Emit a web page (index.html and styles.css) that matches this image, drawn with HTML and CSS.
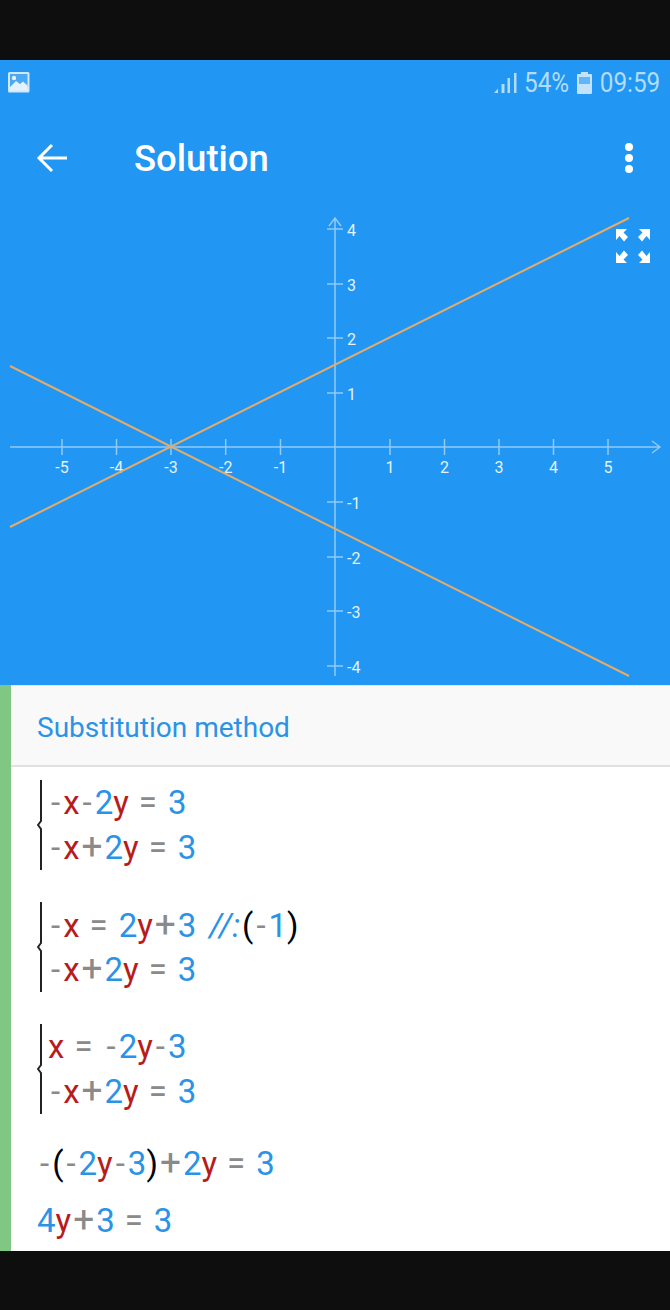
FILE: index.html
```html
<!DOCTYPE html>
<html lang="en">
<head>
    <meta charset="UTF-8">
    <meta name="viewport" content="width=device-width, initial-scale=1.0">
    <title>Solution</title>
    <link rel="stylesheet" href="styles.css">
</head>
<body>
    <div class="black-bar top"></div>

    <div class="blue-area">
        <div class="status-bar">
            <svg class="picture-icon" width="22" height="21" viewBox="0 0 22 21">
                <rect width="21.500" height="20.500" rx="1.500" fill="#cfe8fc"/>
                <rect x="2" y="2" width="17.500" height="13" fill="#4aa8f5"/>
                <path d="M2 15 L8 9 L12 12 L15 9.500 L19.500 13.500 V18.500 H2 Z" fill="#e3f2fd"/>
                <circle cx="6" cy="6" r="2.200" fill="#e3f2fd"/>
            </svg>
            <div class="status-right">
                <svg class="signal" width="23" height="22" viewBox="0 0 23 22">
                    <path d="M0 21 L4 16.500 V21 Z" fill="#b3dcfb"/>
                    <rect x="7.500" y="12" width="3" height="9" fill="#b3dcfb"/>
                    <rect x="13.500" y="6" width="2.500" height="15" fill="#b3dcfb"/>
                    <rect x="20" y="1" width="2.500" height="20" fill="#b3dcfb"/>
                </svg>
                <span class="status-text percent">54%</span>
                <svg class="battery" width="15" height="22" viewBox="0 0 15 22">
                    <path d="M4 0 H11 V2 H14 Q15 2 15 3 V21 Q15 22 14 22 H1 Q0 22 0 21 V3 Q0 2 1 2 H4 Z" fill="#c3e2fb"/>
                    <rect x="2" y="5" width="11" height="7" fill="#64b5f6"/>
                </svg>
                <span class="status-text clock">09:59</span>
            </div>
        </div>

        <div class="toolbar">
            <svg class="back-icon" width="32" height="30" viewBox="0 0 32 30">
                <path d="M31 15 H3 M16 2 L3 15 L16 28" fill="none" stroke="#fff" stroke-width="3"/>
            </svg>
            <div class="toolbar-title">Solution</div>
            <div class="menu-dots"><i></i><i></i><i></i></div>
        </div>

        <div class="graph">
            <!-- svg y = screen y - 200 -->
            <svg width="670" height="485" viewBox="0 200 670 485">
                <g class="axis">
                    <path d="M10 447 H660 M652 441 L660 447 L652 453"/>
                    <path d="M335 676 V218 M329 226 L335 218 L341 226"/>
                    <path d="M62 439 V455 M116.500 439 V455 M171 439 V455 M225.700 439 V455 M280.500 439 V455"/>
                    <path d="M390 439 V455 M444.500 439 V455 M499 439 V455 M553.500 439 V455 M608 439 V455"/>
                    <path d="M327 229 H343 M327 284 H343 M327 338 H343 M327 393 H343"/>
                    <path d="M327 502 H343 M327 557 H343 M327 611 H343 M327 666 H343"/>
                </g>
                <g class="tick-labels">
                    <text x="62" y="473">-5</text>
                    <text x="116.500" y="473">-4</text>
                    <text x="171" y="473">-3</text>
                    <text x="225.700" y="473">-2</text>
                    <text x="280.500" y="473">-1</text>
                    <text x="390" y="473">1</text>
                    <text x="444.500" y="473">2</text>
                    <text x="499" y="473">3</text>
                    <text x="553.500" y="473">4</text>
                    <text x="608" y="473">5</text>
                </g>
                <g class="tick-labels left">
                    <text x="347" y="236">4</text>
                    <text x="347" y="291">3</text>
                    <text x="347" y="345">2</text>
                    <text x="347" y="400">1</text>
                    <text x="347" y="509">-1</text>
                    <text x="347" y="564">-2</text>
                    <text x="347" y="618">-3</text>
                    <text x="347" y="673">-4</text>
                </g>
                <path class="plot-line" d="M10 527 L629 218"/>
                <path class="plot-line" d="M10 366 L629 676"/>
                <g fill="#fff">
                    <path d="M616 229 H627 L623.500 232.500 L628 237 L624 241.500 L619.500 236 L616 240 Z"/>
                    <path d="M650 229 H639 L642.500 232.500 L638 237 L642 241.500 L646.500 236 L650 240 Z"/>
                    <path d="M616 263 H627 L623.500 259.500 L628 255 L624 250.500 L619.500 256 L616 252 Z"/>
                    <path d="M650 263 H639 L642.500 259.500 L638 255 L642 250.500 L646.500 256 L650 252 Z"/>
                </g>
            </svg>
        </div>
    </div>

    <div class="solution">
        <div class="method-title">Substitution method</div>
        <div class="steps">
            <div class="system">
                <svg class="brace" width="8" height="90" viewBox="0 0 8 90">
                    <path d="M4 0 V41 L1 45 L4 49 V90" fill="none" stroke="#222" stroke-width="2"/>
                </svg>
                <div class="system-rows">
                    <div class="row"><span class="op">-</span><span class="var">x</span><span class="op">-</span><span class="num">2</span><span class="var">y</span><span class="eq">=</span><span class="num">3</span></div>
                    <div class="row"><span class="op">-</span><span class="var">x</span><span class="plus">+</span><span class="num">2</span><span class="var">y</span><span class="eq">=</span><span class="num">3</span></div>
                </div>
            </div>

            <div class="system">
                <svg class="brace" width="8" height="90" viewBox="0 0 8 90">
                    <path d="M4 0 V41 L1 45 L4 49 V90" fill="none" stroke="#222" stroke-width="2"/>
                </svg>
                <div class="system-rows">
                    <div class="row"><span class="op">-</span><span class="var">x</span><span class="eq">=</span><span class="num">2</span><span class="var">y</span><span class="plus">+</span><span class="num">3</span><span class="note">//:</span><span class="par">(</span><span class="op">-</span><span class="num">1</span><span class="par">)</span></div>
                    <div class="row"><span class="op">-</span><span class="var">x</span><span class="plus">+</span><span class="num">2</span><span class="var">y</span><span class="eq">=</span><span class="num">3</span></div>
                </div>
            </div>

            <div class="system">
                <svg class="brace" width="8" height="90" viewBox="0 0 8 90">
                    <path d="M4 0 V41 L1 45 L4 49 V90" fill="none" stroke="#222" stroke-width="2"/>
                </svg>
                <div class="system-rows">
                    <div class="row"><span class="var">x</span><span class="eq">=</span><span class="op">-</span><span class="num">2</span><span class="var">y</span><span class="op">-</span><span class="num">3</span></div>
                    <div class="row"><span class="op">-</span><span class="var">x</span><span class="plus">+</span><span class="num">2</span><span class="var">y</span><span class="eq">=</span><span class="num">3</span></div>
                </div>
            </div>

            <div class="line"><span class="op">-</span><span class="par">(</span><span class="op">-</span><span class="num">2</span><span class="var">y</span><span class="op">-</span><span class="num">3</span><span class="par">)</span><span class="plus">+</span><span class="num">2</span><span class="var">y</span><span class="eq">=</span><span class="num">3</span></div>
            <div class="line"><span class="num">4</span><span class="var">y</span><span class="plus">+</span><span class="num">3</span><span class="eq">=</span><span class="num">3</span></div>
        </div>
    </div>

    <div class="black-bar bottom"></div>
</body>
</html>
```

FILE: styles.css
```css
body {
    font-family: Roboto, sans-serif;
    margin: 0;
    padding: 0;
    background-color: #0e0e0e;
    overflow: hidden;
}
.black-bar {
    background-color: #0e0e0e;
}
.black-bar.top {
    height: 60px;
}
.black-bar.bottom {
    height: 59px;
}

.blue-area {
    background-color: #2196f3;
    height: 625px;
}
.status-bar {
    height: 45px;
    display: flex;
    justify-content: space-between;
    align-items: center;
    padding: 0 10px 0 8px;
}
.status-right {
    display: flex;
    align-items: center;
}
.status-text {
    font-size: 27px;
    color: #b3dcfb;
    transform: scaleX(0.9);
    transform-origin: right center;
}
.percent {
    margin-left: 2px;
}
.battery {
    margin-left: 8px;
}
.clock {
    margin-left: 1px;
}

.toolbar {
    height: 95px;
    box-sizing: border-box;
    padding: 11px 37px 0 36px;
    display: flex;
    align-items: center;
}
.back-icon {
    margin-right: 66px;
}
.toolbar-title {
    flex: 1;
    font-size: 36.500px;
    font-weight: 500;
    color: #fff;
}
.menu-dots {
    display: flex;
    flex-direction: column;
    gap: 3px;
}
.menu-dots i {
    width: 8px;
    height: 8px;
    border-radius: 50%;
    background-color: #fff;
}

.graph svg {
    display: block;
}
.axis path {
    fill: none;
    stroke: #90caf9;
    stroke-width: 1.5;
}
.tick-labels text {
    font-size: 16px;
    fill: #e3f2fd;
    text-anchor: middle;
}
.tick-labels.left text {
    text-anchor: start;
}
.plot-line {
    fill: none;
    stroke: #e4ac68;
    stroke-width: 2;
}

.solution {
    height: 566px;
    box-sizing: border-box;
    background-color: #fff;
    border-left: 11px solid #81c784;
    overflow: hidden;
}
.method-title {
    height: 82px;
    box-sizing: border-box;
    padding-left: 26px;
    line-height: 83px;
    font-size: 28px;
    color: #2b93e6;
    background-color: #f9f9f9;
    border-top: 1px solid #e6e6e6;
    border-bottom: 2px solid #e0e0e0;
}

.steps {
    padding: 13px 0 0 26px;
    font-size: 33px;
}
.system {
    display: flex;
    height: 90px;
    margin-bottom: 32px;
}
.brace {
    flex: none;
    margin-right: 3px;
}
.system-rows {
    padding-top: 1px;
}
.row {
    height: 44px;
    line-height: 44px;
    white-space: nowrap;
}
.line {
    height: 57px;
    line-height: 57px;
    white-space: nowrap;
}
.system + .line {
    margin-top: -12px;
}
.num,
.note {
    color: #2b93e6;
}
.var {
    color: #b71c1c;
}
.op,
.plus,
.eq {
    color: #8a8a8a;
}
.op {
    margin: 0 3px;
}
.plus {
    font-size: 37px;
    margin: 0 2px;
}
.eq {
    margin: 0 11px 0 10px;
}
.note {
    font-style: italic;
    margin-left: 13px;
    margin-right: 2px;
}
.par {
    color: #000;
}
```
